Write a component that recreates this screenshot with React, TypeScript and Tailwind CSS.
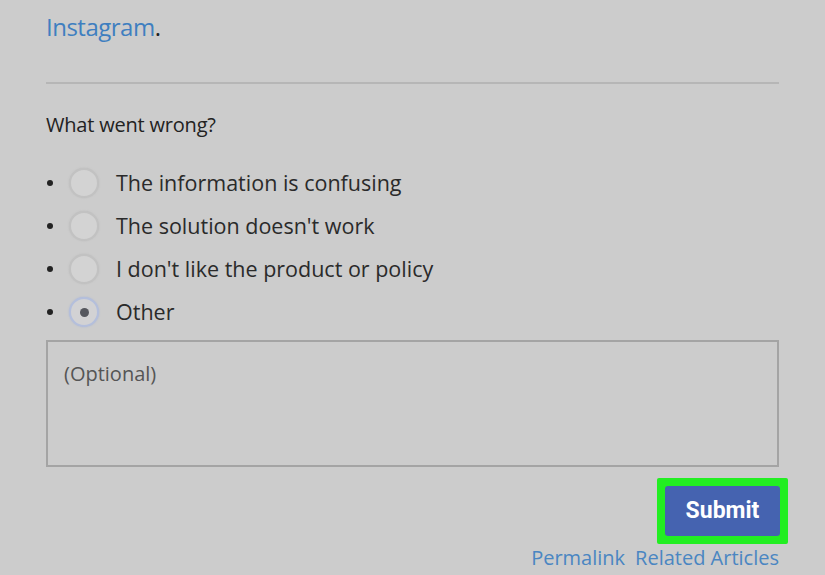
import { useState } from 'react';

const reasons = [
  'The information is confusing',
  "The solution doesn't work",
  "I don't like the product or policy",
  'Other',
];

export default function App() {
  const [picked, setPicked] = useState(3);

  return (
    <div
      className="w-[825px] h-[575px] overflow-hidden bg-[#cccccc] px-[46px]"
      style={{ fontFamily: '"Open Sans", "Liberation Sans", sans-serif' }}
    >
      {/* last line of the paragraph above, scrolled out of view except descenders */}
      <p className="-mt-[36px] h-[26px] text-[24px] leading-[26px] text-[#555] whitespace-nowrap">
        Or find us on Facebook, Twitter, YouTube, or on the app for your phone, by
      </p>
      <p className="mt-[22px] text-[24px] leading-[30px] text-[#222] tracking-[-0.5px]">
        <a className="text-[#3f7fc0]">Instagram</a>.
      </p>

      <div className="mt-[40px] h-[2px] bg-[#b6b6b6]" />

      <p className="mt-[29px] text-[20px] leading-[24px] text-[#222] tracking-[-0.2px]">
        What went wrong?
      </p>

      <ul className="mt-[31px] flex flex-col gap-[13px]">
        {reasons.map((r, i) => (
          <li key={r} className="flex items-center h-[30px]" onClick={() => setPicked(i)}>
            <span className="w-[6px] h-[6px] rounded-full bg-[#222] ml-[1px]" />
            <span
              className={
                i === picked
                  ? 'ml-[16px] w-[30px] h-[30px] rounded-full border-2 border-[#b4bfdc] bg-[#d2d2d4] flex items-center justify-center shadow-[0_0_2px_#aab6d6]'
                  : 'ml-[16px] w-[30px] h-[30px] rounded-full border-2 border-[#c2c2c2] bg-[#d3d3d3] shadow-[0_0_2px_#bbbbbb]'
              }
            >
              {i === picked && <span className="w-[9px] h-[9px] rounded-full bg-[#55575e]" />}
            </span>
            <span className="ml-[17px] text-[21.5px] text-[#2a2a2a]">{r}</span>
          </li>
        ))}
      </ul>

      <div className="mt-[13px] h-[127px] border-2 border-[#a4a4a4] px-[16px] pt-[19px]">
        <span className="text-[20px] leading-[26px] text-[#555]">(Optional)</span>
      </div>

      <div className="flex justify-end mt-[11px] -mr-[9px]">
        <div className="bg-[#22ee22] p-[8px] rounded-[2px]">
          <button
            className="w-[115px] h-[50px] rounded-[3px] bg-[#4563b0] text-white text-[23px] font-bold"
            style={{ fontFamily: 'Roboto, "Liberation Sans", sans-serif' }}
          >
            Submit
          </button>
        </div>
      </div>

      <div className="flex justify-end gap-[10px] text-[20px] leading-[26px] text-[#4a86c2] mt-[1px]">
        <a>Permalink</a>
        <a>Related Articles</a>
      </div>
    </div>
  );
}
